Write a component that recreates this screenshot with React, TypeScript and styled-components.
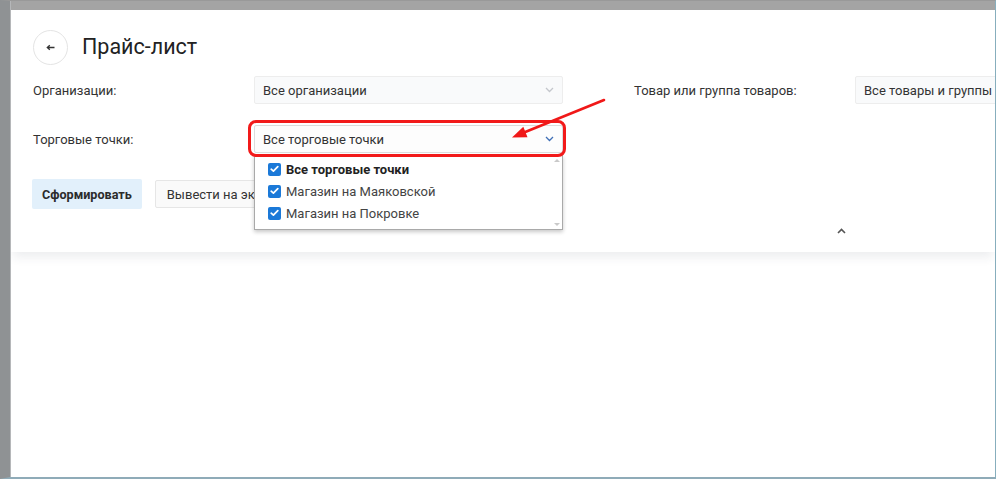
import React from "react";
import styled, { createGlobalStyle } from "styled-components";

const Global = createGlobalStyle`
  html, body { margin: 0; padding: 0; background: #ffffff; }
  body { font-family: Roboto, "Liberation Sans", Arial, sans-serif; color: #333; }
  * { box-sizing: border-box; }
`;

const Frame = styled.div`
  position: relative;
  width: 1000px;
  height: 480px;
  background: #ffffff;
  overflow: hidden;
`;

const Window = styled.div`
  width: 996px;
  height: 479px;
  display: flex;
  flex-direction: column;
  background: #a4a4a4;
  border-top: 1px solid #999;
  border-left: 10px solid #8f9294;
  border-right: 1px solid #87aebd;
  border-bottom: 2px solid #8fabb8;
  box-shadow: inset 1px 0 0 #b5b7b9;
  padding: 9px 0 0 1px;
`;

const Page = styled.div`
  flex: 1;
  background: #ffffff;
  display: flex;
  flex-direction: column;
  overflow: hidden;
`;

const Card = styled.div`
  height: 242px;
  background: #ffffff;
  padding: 17px 0 0 22px;
  display: flex;
  flex-direction: column;
  box-shadow: 0 7px 10px -2px rgba(40, 50, 80, 0.09);
  position: relative;
  z-index: 1;
`;

const Header = styled.div`
  display: flex;
  align-items: center;
  gap: 14px;
  height: 38px;
`;

const BackButton = styled.button`
  width: 35px;
  height: 35px;
  margin-top: 3px;
  border-radius: 50%;
  border: 1px solid #e4e4e4;
  background: #fff;
  display: flex;
  align-items: center;
  justify-content: center;
  padding: 0;
  color: #333;
`;

const Title = styled.h1`
  margin: 0;
  font-size: 21.5px;
  font-weight: 400;
  color: #222;
`;

const FormGrid = styled.div`
  margin-top: 11px;
  display: grid;
  grid-template-columns: 221px 309px 71px 221px 200px;
  grid-template-rows: 28px 28px;
  row-gap: 21px;
  align-items: center;
`;

const Label = styled.div<{ $col: number }>`
  grid-column: ${(p) => p.$col};
  font-size: 13px;
  color: #333;
`;

const SelectBox = styled.div<{ $col: number; $active?: boolean; $width?: number }>`
  grid-column: ${(p) => p.$col};
  position: relative;
  height: 28px;
  width: ${(p) => (p.$width ? `${p.$width}px` : "auto")};
  display: flex;
  align-items: center;
  justify-content: space-between;
  padding: 0 8px;
  font-size: 13px;
  color: #333;
  background: ${(p) => (p.$active ? "#fdfdfd" : "#f9fafb")};
  border: 1px solid ${(p) => (p.$active ? "#dcdcdc" : "#ededed")};
  border-radius: 2px;
  ${(p) =>
    p.$active &&
    `
    &::after {
      content: "";
      position: absolute;
      left: -7px;
      right: -4px;
      top: -6px;
      bottom: -5px;
      border: 3px solid #f21a1a;
      border-radius: 8px;
      pointer-events: none;
      z-index: 3;
    }
  `}
`;

const Chevron = styled.svg<{ $blue?: boolean }>`
  width: 9px;
  height: 6px;
  flex: none;
  color: ${(p) => (p.$blue ? "#3f6fb6" : "#c4c7cc")};
`;

const Dropdown = styled.div`
  position: absolute;
  left: -1px;
  right: -1px;
  top: 29px;
  height: 75px;
  background: #fff;
  border: 1px solid #a9a9a9;
  box-shadow: 0 2px 4px rgba(0, 0, 0, 0.22);
  display: flex;
  z-index: 2;
`;

const OptionList = styled.div`
  flex: 1;
  padding: 2px 0 0 13px;
  display: flex;
  flex-direction: column;
`;

const Option = styled.div<{ $bold?: boolean }>`
  height: 22px;
  display: flex;
  align-items: center;
  gap: 5px;
  font-size: 13px;
  color: ${(p) => (p.$bold ? "#222" : "#444")};
  font-weight: ${(p) => (p.$bold ? 700 : 400)};
`;

const Check = styled.span`
  width: 13px;
  height: 13px;
  border-radius: 2px;
  background: #1b79d8;
  display: flex;
  align-items: center;
  justify-content: center;
  flex: none;
`;

const ScrollTrack = styled.div`
  width: 10px;
  display: flex;
  flex-direction: column;
  justify-content: space-between;
  align-items: center;
  padding: 3px 0 3px;
`;

const ScrollArrow = styled.span<{ $down?: boolean }>`
  width: 0;
  height: 0;
  border-left: 3px solid transparent;
  border-right: 3px solid transparent;
  ${(p) =>
    p.$down ? "border-top: 3px solid #c9c9c9;" : "border-bottom: 3px solid #c9c9c9;"}
`;

const ButtonRow = styled.div`
  margin-top: 26px;
  display: flex;
  align-items: center;
  gap: 13px;
`;

const PrimaryButton = styled.button`
  height: 30px;
  padding: 0 10px;
  margin-left: -1px;
  border: none;
  border-radius: 2px;
  background: #e2f0fb;
  font-family: inherit;
  font-size: 12.6px;
  font-weight: 700;
  color: #2b2b2b;
`;

const SecondaryButton = styled.button`
  height: 28px;
  padding: 0 11px;
  border: 1px solid #e6e6e6;
  border-radius: 2px;
  background: #fafafa;
  font-family: inherit;
  font-size: 13px;
  color: #333;
`;

const Footer = styled.div`
  margin-top: auto;
  height: 24px;
  padding-left: 804px;
  display: flex;
  align-items: flex-start;
`;

const Collapse = styled.svg`
  width: 9px;
  height: 6px;
  color: #555;
`;

const Annotation = styled.svg`
  position: absolute;
  left: 505px;
  top: 95px;
  width: 105px;
  height: 50px;
  z-index: 5;
  overflow: visible;
`;

const ChevronDown = ({ blue }: { blue?: boolean }) => (
  <Chevron $blue={blue} viewBox="0 0 9 6">
    <path d="M1 1 L4.5 4.5 L8 1" fill="none" stroke="currentColor" strokeWidth="1.3" />
  </Chevron>
);

const CheckMark = () => (
  <svg width="9" height="8" viewBox="0 0 9 8">
    <path d="M1.2 4.2 L3.4 6.2 L7.8 1.6" fill="none" stroke="#fff" strokeWidth="1.7" strokeLinecap="round" strokeLinejoin="round" />
  </svg>
);

const options = [
  { label: "Все торговые точки", bold: true },
  { label: "Магазин на Маяковской" },
  { label: "Магазин на Покровке" },
];

export default function App() {
  return (
    <Frame>
      <Global />
      <Window>
        <Page>
          <Card>
            <Header>
              <BackButton aria-label="Назад">
                <svg width="9" height="7" viewBox="0 0 9 7">
                  <path d="M8.5 3.5 H1.5 M3.8 1.2 L1.3 3.5 L3.8 5.8" fill="none" stroke="#333" strokeWidth="1.3" />
                </svg>
              </BackButton>
              <Title>Прайс-лист</Title>
            </Header>
            <FormGrid>
              <Label $col={1}>Организации:</Label>
              <SelectBox $col={2}>
                <span>Все организации</span>
                <ChevronDown />
              </SelectBox>
              <Label $col={4}>Товар или группа товаров:</Label>
              <SelectBox $col={5} $width={160}>
                <span>Все товары и группы</span>
              </SelectBox>
              <Label $col={1}>Торговые точки:</Label>
              <SelectBox $col={2} $active>
                <span>Все торговые точки</span>
                <ChevronDown blue />
                <Dropdown>
                  <OptionList>
                    {options.map((o) => (
                      <Option key={o.label} $bold={o.bold}>
                        <Check>
                          <CheckMark />
                        </Check>
                        {o.label}
                      </Option>
                    ))}
                  </OptionList>
                  <ScrollTrack>
                    <ScrollArrow />
                    <ScrollArrow $down />
                  </ScrollTrack>
                </Dropdown>
              </SelectBox>
            </FormGrid>
            <ButtonRow>
              <PrimaryButton>Сформировать</PrimaryButton>
              <SecondaryButton>Вывести на экран</SecondaryButton>
            </ButtonRow>
            <Footer>
              <Collapse viewBox="0 0 9 6">
                <path d="M1 5 L4.5 1.5 L8 5" fill="none" stroke="currentColor" strokeWidth="1.6" />
              </Collapse>
            </Footer>
          </Card>
        </Page>
      </Window>
      <Annotation viewBox="0 0 105 50">
        <line x1="99" y1="5" x2="19" y2="37.5" stroke="#f01818" strokeWidth="2.6" strokeLinecap="round" />
        <polygon points="7,42.5 22.5,42.3 18.3,31.8" fill="#f01818" />
      </Annotation>
    </Frame>
  );
}
